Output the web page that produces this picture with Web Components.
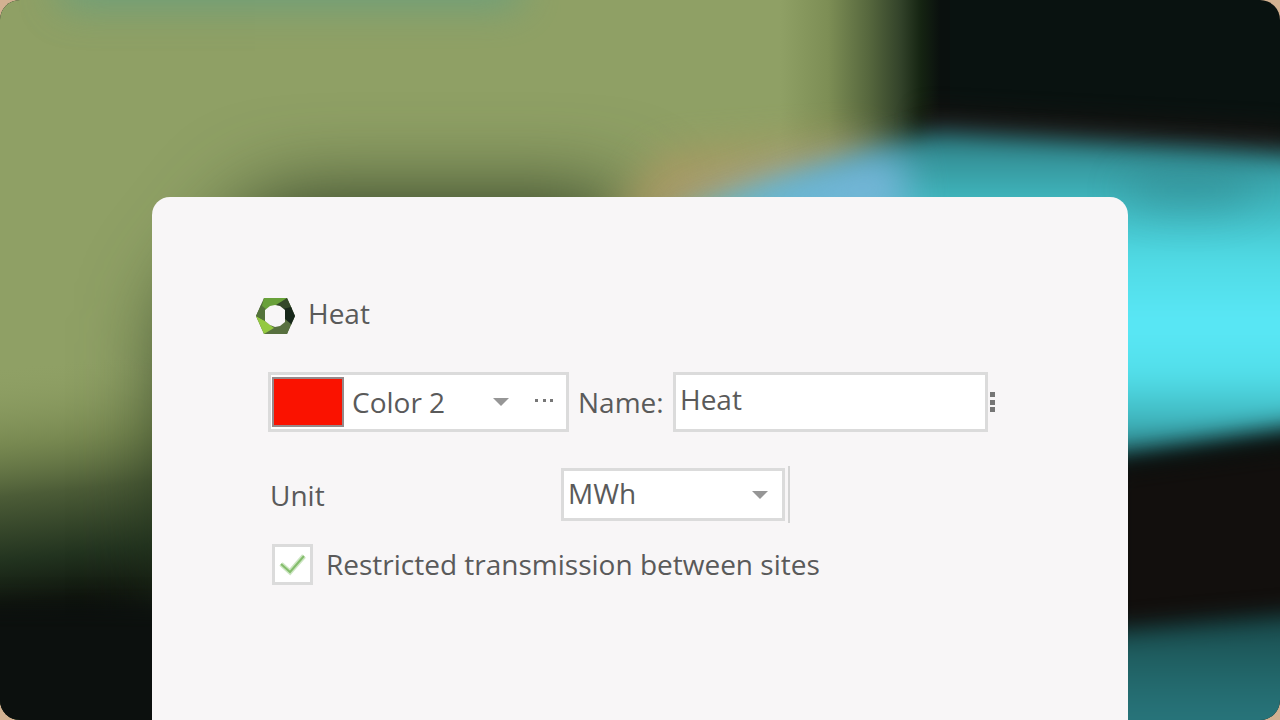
<!DOCTYPE html>
<html lang="en">
<head>
<meta charset="utf-8">
<meta name="viewport" content="width=device-width, initial-scale=1">
<title>Heat</title>
<style>
  html { height: 100%; }
  body {
    margin: 0;
    min-height: 100%;
    display: flex;
    background: #d3b191;
    color: #5a5a5a;
    font: 28px/40px "Open Sans", "Noto Sans", sans-serif;
  }
  blurred-stage { flex: 1; }
</style>
</head>
<body>
<blurred-stage>
  <form-card>
    <carrier-title>Heat</carrier-title>
    <carrier-row>
      <color-picker></color-picker>
      <name-field value="Heat"></name-field>
      <more-button></more-button>
    </carrier-row>
    <unit-field></unit-field>
    <check-field>Restricted transmission between sites</check-field>
  </form-card>
</blurred-stage>

<script>
const define = (name, html, setup) => customElements.define(name, class extends HTMLElement {
  constructor() {
    super();
    this.attachShadow({ mode: 'open' }).innerHTML = html;
  }
  connectedCallback() { if (setup) setup(this, this.shadowRoot); }
});

const arrow = '<svg class="arrow" viewBox="0 0 16 8" aria-hidden="true"><path d="M0 0h16L8 8z" fill="#969696"/></svg>';

define('blurred-stage', `
<style>
  :host { display: grid; border-radius: 20px; overflow: hidden; }
  svg, main { grid-area: 1 / 1; min-width: 0; min-height: 0; }
  svg { width: 100%; height: 100%; contain: size; }
  main { padding: 197px 152px 0; display: flex; z-index: 1; }
</style>
<svg viewBox="0 0 1280 720" preserveAspectRatio="none" aria-hidden="true">
  <defs>
    <filter id="b12" filterUnits="userSpaceOnUse" x="-300" y="-300" width="1900" height="1400" color-interpolation-filters="sRGB"><feGaussianBlur stdDeviation="12"/></filter>
    <filter id="b20" filterUnits="userSpaceOnUse" x="-300" y="-300" width="1900" height="1400" color-interpolation-filters="sRGB"><feGaussianBlur stdDeviation="20"/></filter>
    <filter id="b46" filterUnits="userSpaceOnUse" x="-300" y="-300" width="1900" height="1400" color-interpolation-filters="sRGB"><feGaussianBlur stdDeviation="46"/></filter>
    <linearGradient id="cy" gradientUnits="userSpaceOnUse" x1="0" y1="120" x2="0" y2="460">
      <stop offset="0" stop-color="#2c7379"/><stop offset=".22" stop-color="#3eb2b9"/>
      <stop offset=".4" stop-color="#4fd9e3"/><stop offset=".6" stop-color="#5ae8f7"/>
      <stop offset=".75" stop-color="#52dfea"/><stop offset=".88" stop-color="#40b8c0"/><stop offset="1" stop-color="#2c7b80"/>
    </linearGradient>
    <linearGradient id="low" gradientUnits="userSpaceOnUse" x1="0" y1="600" x2="0" y2="720">
      <stop offset="0" stop-color="#174244"/><stop offset=".6" stop-color="#216568"/><stop offset="1" stop-color="#28757b"/>
    </linearGradient>
    <linearGradient id="edge" gradientUnits="userSpaceOnUse" x1="780" y1="0" x2="940" y2="0">
      <stop offset="0" stop-color="#8fa065"/><stop offset=".3" stop-color="#7d8e55"/>
      <stop offset=".55" stop-color="#57683e"/><stop offset=".75" stop-color="#33432a"/>
      <stop offset=".88" stop-color="#152412"/><stop offset="1" stop-color="#0a100e"/>
    </linearGradient>
    <linearGradient id="fall" gradientUnits="userSpaceOnUse" x1="0" y1="370" x2="0" y2="625">
      <stop offset="0" stop-color="#8c9c60" stop-opacity="0"/><stop offset=".3" stop-color="#6d7e48" stop-opacity=".7"/>
      <stop offset=".5" stop-color="#4c5c37"/><stop offset=".75" stop-color="#22331f"/>
      <stop offset=".92" stop-color="#10160e"/><stop offset="1" stop-color="#0b0f0d"/>
    </linearGradient>
  </defs>
  <rect width="1280" height="720" fill="#091210"/>
  <rect width="950" height="720" fill="url(#edge)"/>
  <rect y="370" x="-200" width="840" height="350" fill="url(#fall)" transform="rotate(-6 0 600)"/>
  <path d="M175 320L270 202H620V800H175z" fill="#22311b" filter="url(#b46)"/>
  <rect x="60" y="-36" width="460" height="42" fill="#5a9f88" opacity=".7" filter="url(#b20)"/>
  <path d="M610 230L660 155L870 140V190L760 230z" fill="#b29862" opacity=".75" filter="url(#b20)"/>
  <rect x="-60" y="606" width="700" height="180" fill="#0c100e" filter="url(#b12)"/>
  <path d="M920 112L1290 130V165L920 140z" fill="#211513" opacity=".8" filter="url(#b12)"/>
  <path d="M660 225L770 186L935 132L1400 160V410L1110 455L650 380z" fill="url(#cy)" filter="url(#b12)"/>
  <path d="M660 215L780 176L900 148L910 220z" fill="#82b8e0" filter="url(#b20)" opacity=".85"/>
  <ellipse cx="1190" cy="190" rx="70" ry="22" fill="#256a70" opacity=".3" filter="url(#b20)"/>
  <path d="M1110 470L1400 433V610L1110 640z" fill="#120f0d" filter="url(#b12)"/>
  <path d="M1100 632L1400 606V800H1100z" fill="url(#low)" filter="url(#b12)"/>
</svg>
<main><slot></slot></main>`);

define('form-card', `
<style>
  :host {
    flex: 1; min-width: 0; box-sizing: border-box;
    display: flex; flex-direction: column;
    padding: 100px 132px 40px 104px;
    background: #f8f6f7; border-radius: 18px 18px 0 0;
  }
</style>
<slot></slot>`);

define('carrier-title', `
<style>
  :host { display: flex; gap: 12px; height: 37px; margin-bottom: 38px; }
  svg { width: 40px; height: 37px; }
  h1 { margin: 0; font: inherit; line-height: 32px; }
</style>
<svg viewBox="0 0 40 37" aria-hidden="true">
  <path d="M8 1H31L36 12L39 19L31 37H8L0 19z" fill="#4c6336"/>
  <path d="M8 1H31L23 12H5z" fill="#69a13a"/>
  <path d="M31 1L36 12L30 17L20 8z" fill="#34482a"/>
  <path d="M35 10L39 19L35 28L27 24V12z" fill="#17271a"/>
  <path d="M35 27L31 37H8L18 28L29 22z" fill="#58703f"/>
  <path d="M0 19L9 24L18 31L8 37z" fill="#94c940"/>
  <path d="M5 8L11 13V25L0 19z" fill="#54733a"/>
  <path d="M19 8L24 9L29 13V25L24 29L19 30L14 28L9 24V13L14 9z" fill="#f8f6f7"/>
</svg>
<h1><slot></slot></h1>`);

define('carrier-row', `
<style>:host { display: flex; align-items: center; margin: 0 0 34px 12px; }</style>
<slot></slot>`);

define('color-picker', `
<style>
  :host {
    display: flex; align-items: center; box-sizing: border-box; flex: none;
    width: 301px; height: 60px; border: 3px solid #dbdbdb; background: #fff; padding: 0 12px 0 1px;
  }
  .swatch { width: 72px; height: 50px; box-sizing: border-box; border: 2px solid #96898a; background: #fa1200; }
  .pick { flex: 1; display: grid; align-items: center; margin: 0 25px 0 8px; }
  select, .arrow { grid-area: 1 / 1; }
  select { appearance: none; border: 0; padding: 0; margin: 0; width: 100%; height: 40px; background: none; font: inherit; color: inherit; }
  .arrow { width: 16px; height: 8px; justify-self: end; pointer-events: none; }
  button { appearance: none; border: 0; padding: 0; background: none; width: 20px; height: 24px; display: flex; }
  button svg { width: 20px; height: 20px; }
</style>
<span class="swatch"></span>
<div class="pick"><select aria-label="Color"><option>Color 2</option></select>${arrow}</div>
<button type="button" aria-label="More colors"><svg viewBox="0 0 20 20" fill="#777"><path d="M1 9h3v3H1zM9 9h3v3H9zM16 9h3v3h-3z"/></svg></button>`);

define('name-field', `
<style>
  :host { display: flex; align-items: center; flex: 1; min-width: 0; }
  label { flex: none; width: 95px; padding-left: 9px; }
  input {
    flex: 1; min-width: 0; height: 60px; box-sizing: border-box; margin: 0;
    border: 3px solid #dbdbdb; border-radius: 0; background: #fff; padding: 0 4px 6px;
    font: inherit; color: inherit; outline: 0;
  }
</style>
<label for="name">Name:</label><input id="name" type="text">`,
(host, root) => { root.querySelector('input').value = host.getAttribute('value'); });

define('more-button', `
<style>
  :host { display: block; flex: none; margin-left: 2px; }
  button { display: block; appearance: none; border: 0; padding: 0; background: none; }
  svg { display: block; width: 6px; height: 22px; }
</style>
<button type="button" aria-label="More"><svg viewBox="0 0 6 22" fill="#767676"><path d="M0 1h5v5H0zM0 9h5v5H0zM0 16h5v5H0z"/></svg></button>`);

define('unit-field', `
<style>
  :host { display: flex; align-items: center; height: 57px; margin: 0 0 21px 14px; }
  label { width: 291px; }
  .edge { padding-right: 3px; border-right: 2px solid #d4d4d4; height: 57px; display: flex; align-items: center; }
  .box { display: grid; align-items: center; box-sizing: border-box; width: 224px; height: 53px; border: 3px solid #dbdbdb; background: #fff; padding: 0 14px 0 4px; }
  select, .arrow { grid-area: 1 / 1; }
  select { appearance: none; border: 0; padding: 0 0 4px; margin: 0; width: 100%; background: none; font: inherit; color: inherit; }
  .arrow { width: 16px; height: 8px; justify-self: end; pointer-events: none; }
</style>
<label for="unit">Unit</label>
<div class="edge"><div class="box"><select id="unit"><option>MWh</option></select>${arrow}</div></div>`);

define('check-field', `
<style>
  :host { display: block; margin-left: 16px; }
  label { display: flex; align-items: flex-start; gap: 13px; }
  .tick { display: grid; flex: none; }
  input, svg { grid-area: 1 / 1; width: 41px; height: 41px; }
  input { appearance: none; margin: 0; box-sizing: border-box; border: 3px solid #dbdbdb; background: #fff; }
  svg { z-index: 1; pointer-events: none; visibility: hidden; }
  input:checked + svg { visibility: visible; }
</style>
<label><span class="tick"><input type="checkbox" checked><svg viewBox="0 0 41 41" fill="none" aria-hidden="true"><path d="M9 20L18 28L32 12" stroke="#cde6c3" stroke-width="5"/><path d="M9 20L18 28L32 12" stroke="#84bd6c" stroke-width="2"/></svg></span><span><slot></slot></span></label>`);
</script>
</body>
</html>
